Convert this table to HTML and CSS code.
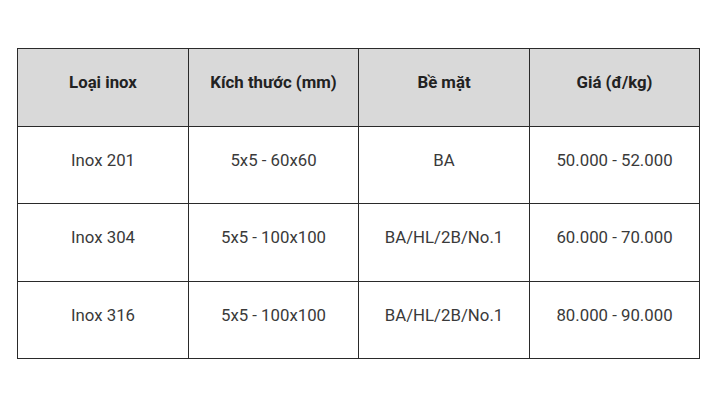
FILE: index.html
```html
<!DOCTYPE html>
<html lang="vi">
<head>
<meta charset="utf-8">
<link rel="stylesheet" href="styles.css">
</head>
<body>
<table class="price-table">
  <colgroup>
    <col class="c1"><col class="c2"><col class="c3"><col class="c4">
  </colgroup>
  <thead>
    <tr>
      <th>Loại inox</th>
      <th>Kích thước (mm)</th>
      <th>Bề mặt</th>
      <th>Giá (đ/kg)</th>
    </tr>
  </thead>
  <tbody>
    <tr>
      <td>Inox 201</td>
      <td>5x5 - 60x60</td>
      <td>BA</td>
      <td>50.000 - 52.000</td>
    </tr>
    <tr>
      <td>Inox 304</td>
      <td>5x5 - 100x100</td>
      <td>BA/HL/2B/No.1</td>
      <td>60.000 - 70.000</td>
    </tr>
    <tr>
      <td>Inox 316</td>
      <td>5x5 - 100x100</td>
      <td>BA/HL/2B/No.1</td>
      <td>80.000 - 90.000</td>
    </tr>
  </tbody>
</table>
</body>
</html>
```

FILE: styles.css
```css
html, body {
  margin: 0;
  padding: 0;
  background: #ffffff;
}
body {
  padding: 48px 0 0 17px;
  font-family: Roboto, "Liberation Sans", Arial, sans-serif;
}
.price-table {
  border-collapse: collapse;
  width: 682px;
  table-layout: fixed;
  color: #3a3a3a;
  font-size: 16.8px;
}
.c1 { width: 171px; }
.c2 { width: 170px; }
.c3 { width: 171px; }
.c4 { width: 170px; }
.price-table th,
.price-table td {
  border: 1px solid #2a2a2a;
  text-align: center;
  line-height: 20px;
  padding: 23px 8px 33.5px;
  height: 20px;
}
.price-table th {
  background: #d9d9d9;
  font-weight: 700;
  color: #222222;
}
```
